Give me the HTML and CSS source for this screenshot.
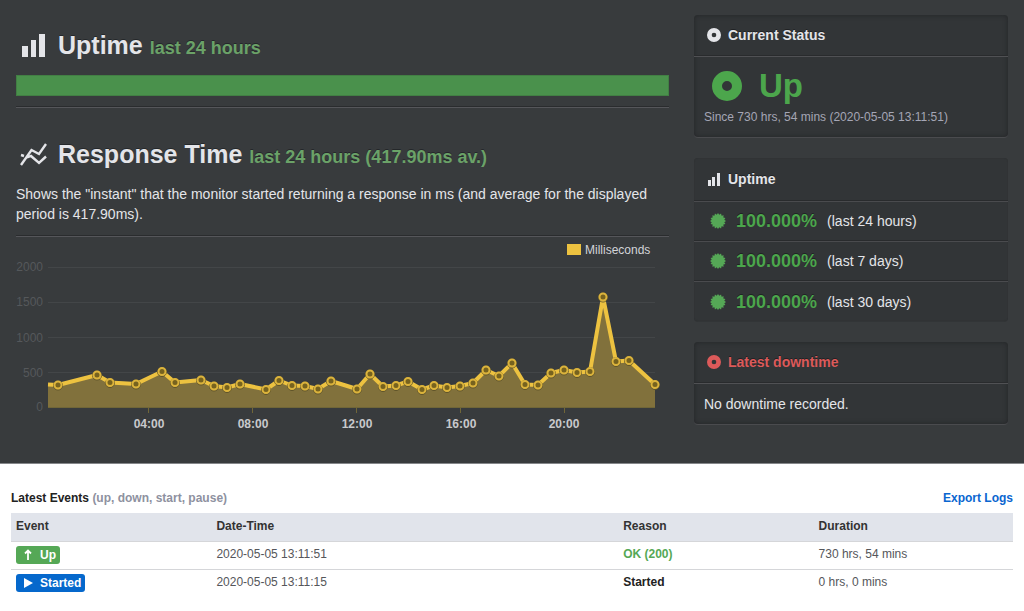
FILE: index.html
```html
<!DOCTYPE html>
<html lang="en">
<head>
<meta charset="utf-8">
<meta name="viewport" content="width=device-width, initial-scale=1">
<title>Monitor status</title>
<link rel="stylesheet" href="styles.css">
</head>
<body>
<svg class="defs" width="0" height="0" aria-hidden="true">
  <symbol id="bars" viewBox="0 0 14 14"><path d="M1 8h3v6H1zM5 5h3v9H5zM10 1h3v13h-3z"/></symbol>
  <symbol id="ring" viewBox="0 0 30 30"><path fill-rule="evenodd" d="M15 0a15 15 0 1 1 0 30a15 15 0 1 1 0-30zM15 10a5 5 0 1 0 0 10a5 5 0 1 0 0-10z"/></symbol>
  <symbol id="burst" viewBox="0 0 16 16"><path d="M16 8L14.280 9.250 15.390 11.060 13.320 11.560 13.660 13.660 11.560 13.320 11.060 15.390 9.250 14.280 8 16 6.750 14.280 4.940 15.390 4.440 13.320 2.340 13.660 2.680 11.560 .61 11.060 1.720 9.250 0 8 1.720 6.750 .61 4.940 2.680 4.440 2.340 2.340 4.440 2.680 4.940 .61 6.750 1.720 8 0 9.250 1.720 11.060 .61 11.560 2.680 13.660 2.340 13.320 4.440 15.390 4.940 14.280 6.750z"/></symbol>
</svg>
<main class="dashboard">
  <div class="metrics">
    <section class="block">
      <h1 class="title"><svg class="title-icon" viewBox="0 0 30 26" aria-hidden="true"><path fill="currentColor" d="M4 12h6v11H4zM13 6h5v17h-5zM21 0h6v23h-6z"/></svg>Uptime <small class="title-note">last 24 hours</small></h1>
      <div class="uptime-bar"></div>
    </section>
    <hr class="rule">
    <section class="block">
      <h1 class="title"><svg class="title-icon" viewBox="0 0 30 26" aria-hidden="true"><path fill="none" stroke="currentColor" stroke-width="2.400" d="M3 22L13.500 7l7.500 4L28 1M3 12l3 1M9 14.500l4-1.500 8 7 7-6.500"/></svg>Response Time <small class="title-note">last 24 hours (417.90ms av.)</small></h1>
      <p class="description">Shows the "instant" that the monitor started returning a response in ms (and average for the displayed period is 417.90ms).</p>
    </section>
    <hr class="rule">
    <svg class="chart" viewBox="0 0 653 200" role="img" aria-label="Response time in milliseconds">
      <defs>
        <marker id="dot" viewBox="0 0 12 12" markerWidth="12" markerHeight="12" refX="6" refY="6" markerUnits="userSpaceOnUse">
          <circle class="dot-shade" cx="6" cy="6.500" r="4.500"/><circle class="dot" cx="6" cy="6" r="3.500"/>
        </marker>
      </defs>
      <path class="grid" d="M32 30.500H639M32 65.500H639M32 100.500H639M32 135.500H639"/>
      <g class="y-label"><text x="27" y="34">2000</text><text x="27" y="69">1500</text><text x="27" y="105">1000</text><text x="27" y="140">500</text><text x="27" y="174">0</text></g>
      <path class="area" d="M32 147.500L42 148 81 138 94 145.500 120 147 146 134.500 159 145.500 185 143 198 149 211 150.500 224 147 250 152.500 263 143.500 276 148.500 289 149 302 152 315 144 341 152 354 137 367 149.500 380 148.500 392 144.500 406 152.500 418 148.500 431 150.500 444 149 457 146 470 133 483 139 496 126 509 147.500 522 148 535 136 548 133 561 135.500 574 134.500 587 60 600 124.500 613 123.500 639 147.500V171H32z"/>
      <path class="ticks" d="M32 170.500H639M132.500 171v5M236.500 171v5M340.500 171v5M444.500 171v5M548.500 171v5"/>
      <polyline class="line" marker-mid="url(#dot)" marker-end="url(#dot)" points="32,147.500 42,148 81,138 94,145.500 120,147 146,134.500 159,145.500 185,143 198,149 211,150.500 224,147 250,152.500 263,143.500 276,148.500 289,149 302,152 315,144 341,152 354,137 367,149.500 380,148.500 392,144.500 406,152.500 418,148.500 431,150.500 444,149 457,146 470,133 483,139 496,126 509,147.500 522,148 535,136 548,133 561,135.500 574,134.500 587,60 600,124.500 613,123.500 639,147.500"/>
      <g class="x-label"><text x="133" y="191">04:00</text><text x="237" y="191">08:00</text><text x="341" y="191">12:00</text><text x="445" y="191">16:00</text><text x="548" y="191">20:00</text></g>
      <rect class="legend-key" x="551" y="7" width="14" height="11"/>
      <text class="legend" x="569" y="17">Milliseconds</text>
    </svg>
  </div>
  <aside class="panels">
    <section class="panel">
      <h2 class="panel-title"><svg class="panel-icon" aria-hidden="true"><use href="#ring"/></svg>Current Status</h2>
      <div class="status">
        <p class="status-value"><svg class="status-icon" aria-hidden="true"><use href="#ring"/></svg>Up</p>
        <p class="status-since">Since 730 hrs, 54 mins (2020-05-05 13:11:51)</p>
      </div>
    </section>
    <section class="panel panel-flat">
      <h2 class="panel-title"><svg class="panel-icon" aria-hidden="true"><use href="#bars"/></svg>Uptime</h2>
      <ul class="periods">
        <li class="period"><svg class="period-icon" aria-hidden="true"><use href="#burst"/></svg><strong class="percent">100.000%</strong>(last 24 hours)</li>
        <li class="period"><svg class="period-icon" aria-hidden="true"><use href="#burst"/></svg><strong class="percent">100.000%</strong>(last 7 days)</li>
        <li class="period"><svg class="period-icon" aria-hidden="true"><use href="#burst"/></svg><strong class="percent">100.000%</strong>(last 30 days)</li>
      </ul>
    </section>
    <section class="panel">
      <h2 class="panel-title alert"><svg class="panel-icon" aria-hidden="true"><use href="#ring"/></svg>Latest downtime</h2>
      <p class="panel-text">No downtime recorded.</p>
    </section>
  </aside>
</main>
<section class="events">
  <header class="events-head">
    <h2 class="events-title">Latest Events <span class="events-note">(up, down, start, pause)</span></h2>
    <a class="export" href="#">Export Logs</a>
  </header>
  <table class="log">
    <thead><tr><th class="col-event">Event</th><th class="col-date">Date-Time</th><th class="col-reason">Reason</th><th class="col-duration">Duration</th></tr></thead>
    <tbody>
      <tr><td><span class="badge up"><svg class="badge-icon" viewBox="0 0 12 12" aria-hidden="true"><path fill="none" stroke="currentColor" stroke-width="1.800" d="M6 11V2M3 4.500L6 1.500l3 3"/></svg>Up</span></td><td>2020-05-05 13:11:51</td><td class="reason ok">OK (200)</td><td>730 hrs, 54 mins</td></tr>
      <tr><td><span class="badge started"><svg class="badge-icon" viewBox="0 0 12 12" aria-hidden="true"><path fill="currentColor" d="M2 1l9 5-9 5z"/></svg>Started</span></td><td>2020-05-05 13:11:15</td><td class="reason">Started</td><td>0 hrs, 0 mins</td></tr>
    </tbody>
  </table>
</section>
</body>
</html>
```

FILE: styles.css
```css
* { box-sizing: border-box; }
body { margin: 0; background: #fff; color: #e4e5e9; font: 14px/20px "Liberation Sans", Arial, sans-serif; }
h1, h2, p, ul { margin: 0; padding: 0; }
.defs { display: block; }

.dashboard {
  display: grid;
  grid-template-columns: 653fr 314fr;
  gap: 25px;
  padding: 15px 16px 26px;
  background: #383b3d;
  border-bottom: 1px solid #85878a;
}
.metrics { display: flex; flex-direction: column; }
.title {
  display: flex;
  align-items: baseline;
  gap: 7px;
  padding-top: 15px;
  font-size: 25px;
  line-height: 30px;
  text-shadow: 0 -1px 0 #24272a;
}
.title-icon { width: 30px; height: 26px; margin: 0 3px 0 2px; align-self: center; }
.title-note { color: #6ba268; font-size: 18px; }
.uptime-bar { height: 21px; margin-top: 12px; background: #4a914c; border: 1px solid #427f44; }
.rule { width: 100%; height: 2px; margin: 10px 0 0; border: 0; background: #55565a; border-top: 1px solid #2a2c2e; }
.rule + .block { padding-top: 16px; }
.description { margin-top: 12px; padding-bottom: 1px; }
.chart { display: block; width: 100%; }
.grid { stroke: #434648; }
.y-label { fill: #55585b; font-size: 12px; text-anchor: end; }
.x-label { fill: #c8c9cc; font-size: 12px; font-weight: bold; text-anchor: middle; }
.area { fill: #81713c; }
.ticks { fill: none; stroke: #706638; }
.line { fill: none; stroke: #edc240; stroke-width: 4; stroke-linejoin: round; }
.dot-shade { fill: none; stroke: #5f5429; stroke-width: 1; }
.dot { fill: #76621f; stroke: #dbb33c; stroke-width: 2; }
.legend-key { fill: #edc240; }
.legend { fill: #d3d4d8; font-size: 12px; }

.panels { display: flex; flex-direction: column; gap: 20px; }
.panel {
  background: #323537;
  border-radius: 4px;
  border-bottom: 1px solid #4a4b4e;
  box-shadow: inset 0 0 5px #232527;
}
.panel-flat { border-color: #323537; box-shadow: inset 0 0 1px #292b2d; }
.panel-title {
  display: flex;
  align-items: center;
  gap: 7px;
  height: 41px;
  padding: 0 13px;
  border-bottom: 1px solid #292b2d;
  font-size: 14px;
  text-shadow: 0 -1px 0 #202224;
}
.panel-flat .panel-title { height: 43px; }
.panel-icon { width: 14px; height: 14px; fill: currentColor; }
.alert { color: #dc5a5a; }
.status { padding: 9px 10px 10px; border-top: 1px solid #505154; }
.status-value { display: flex; align-items: center; gap: 17px; padding-left: 8px; color: #4ca64c; font-size: 33px; font-weight: bold; line-height: 40px; }
.status-icon { width: 30px; height: 30px; fill: currentColor; }
.status-since { padding-top: 1px; color: #a5a6b5; font-size: 12px; }
.periods { list-style: none; }
.period { display: flex; align-items: center; height: 40px; padding: 0 16px; border-top: 1px solid #4a4b4e; border-bottom: 1px solid #292b2d; }
.period:last-child { border-bottom: 0; }
.period-icon { width: 16px; height: 16px; margin-right: 10px; fill: #55a856; }
.percent { margin-right: 10px; color: #4ca64c; font-size: 18px; text-shadow: 0 -1px 0 #202224; }
.panel-text { padding: 10px; border-top: 1px solid #505154; }

.events { padding: 24px 11px 10px; color: #55565a; font-size: 12px; }
.events-head { display: flex; justify-content: space-between; padding-bottom: 5px; }
.events-title { color: #222; font-size: 12px; }
.events-note { color: #8e91a0; }
.export { color: #0a66d0; font-weight: bold; text-decoration: none; }
.log { width: 100%; border-collapse: collapse; table-layout: fixed; font-size: 12px; }
.log th, .log td { height: 28px; padding: 0 5px 2px; text-align: left; border-bottom: 1px solid #d5d6d9; }
.log tbody tr:last-child td { border-bottom: 0; }
.log th { background: #e1e4eb; color: #333; }
.col-event { width: 20%; }
.col-date { width: 40.6%; }
.col-reason { width: 19.5%; }
.log .reason { color: #222; font-weight: bold; }
.log .ok { color: #55a856; }
.badge { display: inline-flex; align-items: center; gap: 6px; height: 18px; padding: 0 4px 0 6px; border-radius: 3px; color: #fff; font-weight: bold; vertical-align: middle; }
.badge-icon { width: 12px; height: 12px; }
.up { background: #55a856; }
.started { background: #0568cc; }
```
